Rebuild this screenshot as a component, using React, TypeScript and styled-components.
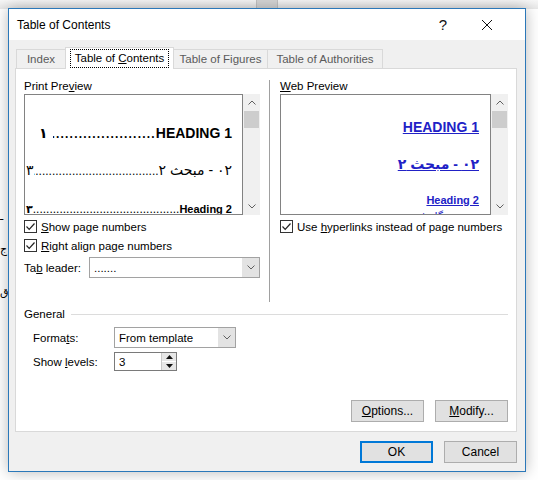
import React from "react";
import styled, { createGlobalStyle } from "styled-components";

const GlobalStyle = createGlobalStyle`
  html, body {
    margin: 0;
    padding: 0;
  }
  body {
    font-family: "Segoe UI", "Liberation Sans", "DejaVu Sans", Arial, sans-serif;
    font-size: 11.5px;
    color: #000;
    background: #fff;
  }
`;

const Desktop = styled.div`
  position: relative;
  width: 538px;
  height: 480px;
  overflow: hidden;
  box-sizing: border-box;
  padding: 8px 0 0 8px;
  background: linear-gradient(#f7f7f7, #e7e7e7) 0 0 / 100% 9px no-repeat, #fff;
`;

const BehindThumb = styled.div`
  position: absolute;
  left: 256px;
  top: 0;
  width: 20px;
  height: 9px;
  background: #d6d6d6;
  border-left: 1px solid #c2c2c2;
  border-right: 1px solid #c2c2c2;
`;

const BehindGlyph = styled.span<{ $top: number }>`
  position: absolute;
  left: 0;
  top: ${(p) => p.$top}px;
  font-family: "DejaVu Sans", sans-serif;
  font-size: 11px;
`;

const Dialog = styled.div`
  position: relative;
  width: 518px;
  height: 464px;
  box-sizing: border-box;
  border: 1px solid #2b78b9;
  background: #f0f0f0;
  box-shadow: 0 0 14px rgba(0, 0, 0, 0.28);
  display: flex;
  flex-direction: column;
`;

const TitleBar = styled.div`
  flex: none;
  height: 31px;
  background: #fff;
  display: flex;
  align-items: center;
  padding: 0 16px 0 8px;
`;

const Title = styled.div`
  flex: 1;
  font-size: 12px;
`;

const CaptionButton = styled.div`
  width: 44px;
  height: 31px;
  display: flex;
  align-items: center;
  justify-content: center;
  font-size: 15px;
  color: #111;
`;

const Body = styled.div`
  flex: 1;
  display: flex;
  flex-direction: column;
  padding: 7px 8px 0 6px;
`;

const TabRow = styled.div`
  position: relative;
  z-index: 1;
  display: flex;
  align-items: flex-end;
  height: 22px;
  margin-bottom: -1px;
  padding-left: 2px;
`;

const Tab = styled.div<{ $w: number; $active?: boolean }>`
  width: ${(p) => p.$w}px;
  height: ${(p) => (p.$active ? 22 : 19)}px;
  margin-bottom: ${(p) => (p.$active ? 0 : 1)}px;
  margin-left: -1px;
  box-sizing: border-box;
  border: 1px solid #d9d9d9;
  border-bottom: none;
  background: ${(p) => (p.$active ? "#fff" : "#f0f0f0")};
  color: ${(p) => (p.$active ? "#000" : "#5a5a5a")};
  display: flex;
  align-items: ${(p) => (p.$active ? "flex-start" : "center")};
  justify-content: center;
  padding-top: ${(p) => (p.$active ? 1 : 0)}px;
  white-space: nowrap;
`;

const FocusLabel = styled.span`
  border: 1px dotted #000;
  padding: 0 4px;
  line-height: 17px;
`;

const Acc = styled.span`
  text-decoration: underline;
`;

const Panel = styled.div`
  flex: none;
  height: 364px;
  box-sizing: border-box;
  border: 1px solid #d9d9d9;
  background: #fff;
  display: flex;
  flex-direction: column;
  padding: 9px 8px 9px 8px;
`;

const TopSection = styled.div`
  flex: none;
  display: flex;
  height: 224px;
`;

const Column = styled.div<{ $w: number }>`
  width: ${(p) => p.$w}px;
  display: flex;
  flex-direction: column;
`;

const Divider = styled.div`
  width: 1px;
  margin: 2px 10px 0 9px;
  background: #a0a0a0;
`;

const GroupLabel = styled.div`
  height: 16px;
  line-height: 16px;
`;

const PreviewFrame = styled.div`
  display: flex;
  height: 121px;
`;

const PreviewBox = styled.div`
  flex: 1;
  min-width: 0;
  border: 1px solid #828282;
  background: #fff;
  overflow: hidden;
`;

const ScrollBar = styled.div`
  width: 17px;
  background: #f0f0f0;
  display: flex;
  flex-direction: column;
`;

const ScrollArrow = styled.div`
  height: 17px;
  display: flex;
  align-items: center;
  justify-content: center;
`;

const ScrollThumb = styled.div`
  height: 17px;
  margin: 0 1px;
  background: #cdcdcd;
`;

const ScrollTrack = styled.div`
  flex: 1;
`;

const TocLine = styled.div<{ $mt: number; $size: number; $bold?: boolean; $indent?: number }>`
  direction: rtl;
  display: flex;
  align-items: baseline;
  margin-top: ${(p) => p.$mt}px;
  padding: 0 10px 0 ${(p) => p.$indent ?? 1}px;
  font-family: "Liberation Sans", "DejaVu Sans", sans-serif;
  font-size: ${(p) => p.$size}px;
  font-weight: ${(p) => (p.$bold ? 700 : 400)};
  line-height: 18px;
  white-space: nowrap;
`;

const TocText = styled.span`
  flex: none;
`;

const Leader = styled.span<{ $bold?: boolean }>`
  flex: 1;
  min-width: 0;
  overflow: hidden;
  font-size: 12px;
  font-weight: ${(p) => (p.$bold ? 700 : 400)};
  letter-spacing: ${(p) => (p.$bold ? 1.2 : 0)}px;
`;

const PageNum = styled.span<{ $gap?: number }>`
  flex: none;
  margin-right: ${(p) => p.$gap ?? 0}px;
  font-family: "DejaVu Sans", sans-serif;
`;

const WebLine = styled.div<{ $mt: number; $size: number; $bold?: boolean; $lh?: number }>`
  direction: rtl;
  text-align: right;
  margin-top: ${(p) => p.$mt}px;
  padding-right: 11px;
  font-family: "Liberation Sans", "DejaVu Sans", sans-serif;
  font-size: ${(p) => p.$size}px;
  font-weight: ${(p) => (p.$bold ? 700 : 400)};
  line-height: ${(p) => p.$lh ?? 18}px;
  white-space: nowrap;
`;

const Link = styled.span`
  color: #2121c6;
  text-decoration: underline;
`;

const CheckRow = styled.div<{ $mt?: number }>`
  display: flex;
  align-items: center;
  height: 19px;
  margin-top: ${(p) => p.$mt ?? 0}px;
  white-space: nowrap;
`;

const CheckBox = styled.span`
  flex: none;
  width: 13px;
  height: 13px;
  box-sizing: border-box;
  border: 1px solid #333;
  background: #fff;
  display: flex;
  align-items: center;
  justify-content: center;
  margin-right: 4px;
`;

const FieldRow = styled.div<{ $mt: number; $indent?: number }>`
  display: flex;
  align-items: center;
  margin-top: ${(p) => p.$mt}px;
  padding-left: ${(p) => p.$indent ?? 0}px;
  white-space: nowrap;
`;

const FieldLabel = styled.div<{ $w: number }>`
  width: ${(p) => p.$w}px;
`;

const Select = styled.div<{ $w: number }>`
  width: ${(p) => p.$w}px;
  height: 21px;
  box-sizing: border-box;
  border: 1px solid #a2a2a2;
  background: #fff;
  display: flex;
`;

const SelectValue = styled.div`
  flex: 1;
  display: flex;
  align-items: center;
  padding-left: 4px;
`;

const SelectButton = styled.div`
  width: 17px;
  background: #e3e3e3;
  display: flex;
  align-items: center;
  justify-content: center;
`;

const Spin = styled.div`
  width: 63px;
  height: 19px;
  box-sizing: border-box;
  border: 1px solid #7a7a7a;
  background: #fff;
  display: flex;
`;

const SpinButtons = styled.div`
  width: 14px;
  display: flex;
  flex-direction: column;
  border-left: 1px solid #c8c8c8;
`;

const SpinHalf = styled.div<{ $top?: boolean }>`
  flex: 1;
  background: #e6e6e6;
  display: flex;
  align-items: center;
  justify-content: center;
  border-top: ${(p) => (p.$top ? "none" : "1px solid #fff")};
`;

const GeneralHeader = styled.div`
  display: flex;
  align-items: center;
  height: 16px;
  margin-top: 4px;
`;

const Rule = styled.div`
  flex: 1;
  height: 1px;
  margin-left: 6px;
  background: #dcdcdc;
`;

const ButtonRow = styled.div<{ $pt?: number; $end?: boolean }>`
  display: flex;
  justify-content: flex-end;
  gap: 11px;
  margin-top: ${(p) => (p.$end ? "auto" : "0")};
  padding-top: ${(p) => p.$pt ?? 0}px;
`;

const Button = styled.button<{ $default?: boolean }>`
  width: 73px;
  height: 22px;
  box-sizing: border-box;
  padding: 0;
  border: ${(p) => (p.$default ? "2px solid #0078d7" : "1px solid #adadad")};
  background: #e1e1e1;
  color: #000;
  font: inherit;
  font-size: 12px;
`;

const Chevron = ({ up }: { up?: boolean }) => (
  <svg width="8" height="5" viewBox="0 0 8 5">
    <path
      d={up ? "M0.5 4.5 L4 1 L7.5 4.5" : "M0.5 0.5 L4 4 L7.5 0.5"}
      fill="none"
      stroke="#606060"
      strokeWidth="1"
    />
  </svg>
);

const Triangle = ({ up }: { up?: boolean }) => (
  <svg width="7" height="4" viewBox="0 0 7 4">
    <path d={up ? "M0 4 L3.5 0 L7 4 Z" : "M0 0 L3.5 4 L7 0 Z"} fill="#111" />
  </svg>
);

const Check = () => (
  <CheckBox>
    <svg width="11" height="11" viewBox="0 0 11 11">
      <path d="M1.5 5.5 L4.2 8.3 L9.5 2.5" fill="none" stroke="#222" strokeWidth="1.2" />
    </svg>
  </CheckBox>
);

const CloseIcon = () => (
  <svg width="12" height="12" viewBox="0 0 12 12">
    <path d="M1 1 L11 11 M11 1 L1 11" stroke="#111" strokeWidth="1" />
  </svg>
);

const Scroller = () => (
  <ScrollBar>
    <ScrollArrow>
      <Chevron up />
    </ScrollArrow>
    <ScrollThumb />
    <ScrollTrack />
    <ScrollArrow>
      <Chevron />
    </ScrollArrow>
  </ScrollBar>
);

const dots = ".".repeat(90);

const App = () => (
  <>
    <GlobalStyle />
    <Desktop>
      <BehindThumb />
      <BehindGlyph $top={210}>ـ</BehindGlyph>
      <BehindGlyph $top={243}>ج</BehindGlyph>
      <BehindGlyph $top={286}>ق</BehindGlyph>
      <Dialog>
        <TitleBar>
          <Title>Table of Contents</Title>
          <CaptionButton>?</CaptionButton>
          <CaptionButton>
            <CloseIcon />
          </CaptionButton>
        </TitleBar>
        <Body>
          <TabRow>
            <Tab $w={50}>Index</Tab>
            <Tab $w={109} $active>
              <FocusLabel>
                Table of <Acc>C</Acc>ontents
              </FocusLabel>
            </Tab>
            <Tab $w={95}>Table of Figures</Tab>
            <Tab $w={116}>Table of Authorities</Tab>
          </TabRow>
          <Panel>
            <TopSection>
              <Column $w={236}>
                <GroupLabel>
                  Print Pre<Acc>v</Acc>iew
                </GroupLabel>
                <PreviewFrame>
                  <PreviewBox>
                    <TocLine $mt={29} $size={14} $bold $indent={14}>
                      <TocText>HEADING 1</TocText>
                      <Leader $bold>{dots}</Leader>
                      <PageNum $gap={5}>١</PageNum>
                    </TocLine>
                    <TocLine $mt={18} $size={14}>
                      <TocText>٠٢ - مبحث ٢ </TocText>
                      <Leader>{dots}</Leader>
                      <PageNum>٣</PageNum>
                    </TocLine>
                    <TocLine $mt={20} $size={11} $bold>
                      <TocText>Heading 2 </TocText>
                      <Leader>{dots}</Leader>
                      <PageNum>٣</PageNum>
                    </TocLine>
                  </PreviewBox>
                  <Scroller />
                </PreviewFrame>
                <CheckRow $mt={2}>
                  <Check />
                  <span>
                    <Acc>S</Acc>how page numbers
                  </span>
                </CheckRow>
                <CheckRow>
                  <Check />
                  <span>
                    <Acc>R</Acc>ight align page numbers
                  </span>
                </CheckRow>
                <FieldRow $mt={2}>
                  <FieldLabel $w={65}>
                    Ta<Acc>b</Acc> leader:
                  </FieldLabel>
                  <Select $w={171}>
                    <SelectValue>.......</SelectValue>
                    <SelectButton>
                      <Chevron />
                    </SelectButton>
                  </Select>
                </FieldRow>
              </Column>
              <Divider />
              <Column $w={228}>
                <GroupLabel>
                  <Acc>W</Acc>eb Preview
                </GroupLabel>
                <PreviewFrame>
                  <PreviewBox>
                    <WebLine $mt={23} $size={14} $bold>
                      <Link>HEADING 1</Link>
                    </WebLine>
                    <WebLine $mt={19} $size={14} $bold>
                      <Link>٠٢ - مبحث ٢</Link>
                    </WebLine>
                    <WebLine $mt={19} $size={11} $bold $lh={16}>
                      <Link>Heading 2</Link>
                    </WebLine>
                    <WebLine $mt={0} $size={11} $lh={16}>
                      <Link>مقدمه نگارش</Link>
                    </WebLine>
                  </PreviewBox>
                  <Scroller />
                </PreviewFrame>
                <CheckRow $mt={2}>
                  <Check />
                  <span>
                    Use <Acc>h</Acc>yperlinks instead of page numbers
                  </span>
                </CheckRow>
              </Column>
            </TopSection>
            <GeneralHeader>
              <span>General</span>
              <Rule />
            </GeneralHeader>
            <FieldRow $mt={5} $indent={9}>
              <FieldLabel $w={81}>
                Forma<Acc>t</Acc>s:
              </FieldLabel>
              <Select $w={122}>
                <SelectValue>From template</SelectValue>
                <SelectButton>
                  <Chevron />
                </SelectButton>
              </Select>
            </FieldRow>
            <FieldRow $mt={4} $indent={9}>
              <FieldLabel $w={81}>
                Show <Acc>l</Acc>evels:
              </FieldLabel>
              <Spin>
                <SelectValue>3</SelectValue>
                <SpinButtons>
                  <SpinHalf $top>
                    <Triangle up />
                  </SpinHalf>
                  <SpinHalf>
                    <Triangle />
                  </SpinHalf>
                </SpinButtons>
              </Spin>
            </FieldRow>
            <ButtonRow $end>
              <Button>
                <Acc>O</Acc>ptions...
              </Button>
              <Button>
                <Acc>M</Acc>odify...
              </Button>
            </ButtonRow>
          </Panel>
          <ButtonRow $pt={9}>
            <Button $default>OK</Button>
            <Button>Cancel</Button>
          </ButtonRow>
        </Body>
      </Dialog>
    </Desktop>
  </>
);

export default App;
